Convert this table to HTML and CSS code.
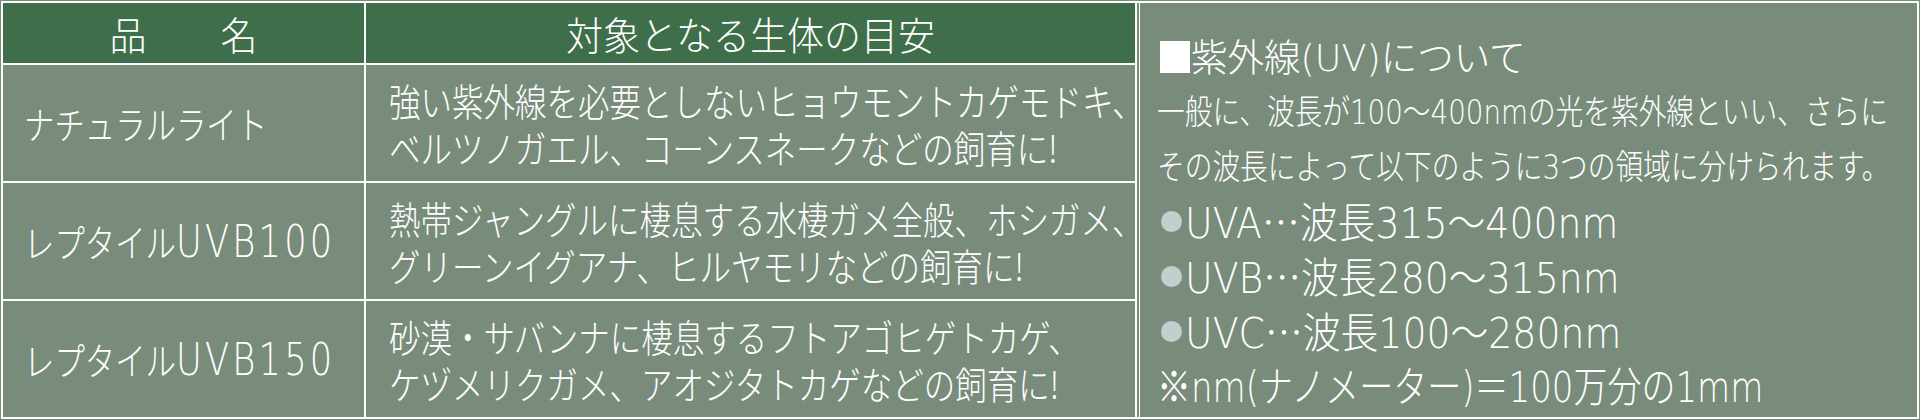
FILE: index.html
```html
<!DOCTYPE html>
<html lang="ja">
<head>
<meta charset="utf-8">
<title>紫外線ライト</title>
<link rel="stylesheet" href="styles.css">
</head>
<body>
<div class="frame">
  <div class="table">
    <div class="cell head"><span class="sx">品　　名</span></div>
    <div class="cell head"><span class="sx">対象となる生体の目安</span></div>

    <div class="cell name"><span class="sx">ナチュラルライト</span></div>
    <div class="cell desc">
      <span class="sx">強い紫外線を必要としないヒョウモントカゲモドキ、</span>
      <span class="sx">ベルツノガエル、コーンスネークなどの飼育に!</span>
    </div>

    <div class="cell name"><span class="sx">レプタイル<span class="en">UVB100</span></span></div>
    <div class="cell desc">
      <span class="sx">熱帯ジャングルに棲息する水棲ガメ全般、ホシガメ、</span>
      <span class="sx">グリーンイグアナ、ヒルヤモリなどの飼育に!</span>
    </div>

    <div class="cell name"><span class="sx">レプタイル<span class="en">UVB150</span></span></div>
    <div class="cell desc">
      <span class="sx">砂漠・サバンナに棲息するフトアゴヒゲトカゲ、</span>
      <span class="sx">ケヅメリクガメ、アオジタトカゲなどの飼育に!</span>
    </div>
  </div>

  <div class="panel">
    <p class="title"><span class="sq"></span><span class="sx">紫外線<span class="en">(UV)</span>について</span></p>
    <p class="line"><span class="sx">一般に、波長が<span class="en">100</span>～<span class="en">400nm</span>の光を紫外線といい、さらに</span></p>
    <p class="line"><span class="sx">その波長によって以下のように<span class="en">3</span>つの領域に分けられます。</span></p>
    <p class="line item"><span class="dot"></span><span class="sx"><span class="en">UVA</span>…波長<span class="en">315</span>～<span class="en">400nm</span></span></p>
    <p class="line item"><span class="dot"></span><span class="sx"><span class="en">UVB</span>…波長<span class="en">280</span>～<span class="en">315nm</span></span></p>
    <p class="line item"><span class="dot"></span><span class="sx"><span class="en">UVC</span>…波長<span class="en">100</span>～<span class="en">280nm</span></span></p>
    <p class="line note"><span class="sx">※<span class="en">nm(</span>ナノメーター<span class="en">)</span>＝<span class="en">100</span>万分の<span class="en">1mm</span></span></p>
  </div>
</div>
</body>
</html>
```

FILE: styles.css
```css
html, body {
  margin: 0;
  padding: 0;
}

body {
  width: 1920px;
  height: 420px;
  background: #798c7c;
  font-family: "Noto Sans CJK JP", "Noto Sans", sans-serif;
  font-weight: 300;
  color: #ffffff;
  overflow: hidden;
}

.frame {
  margin: 1px;
  border: 2px solid #ffffff;
  height: 414px;
  display: flex;
  gap: 2px;
}

.table {
  flex: none;
  width: 1132px;
  padding-right: 2px;
  background: #ffffff;
  display: grid;
  grid-template-columns: 361px 769px;
  grid-template-rows: 60px 1fr 1fr 1fr;
  gap: 2px;
}

.cell {
  min-width: 0;
  background: #798c7c;
  display: flex;
  flex-direction: column;
  justify-content: center;
}

/* Glyphs of the original face are tall and narrow: set the width by
   font-size and stretch the glyphs vertically. */
.sx {
  display: inline-block;
  white-space: nowrap;
  transform-origin: left center;
}

.head {
  background: #3e6e4a;
  align-items: center;
  font-size: 37px;
  line-height: 60px;
}

.head .sx {
  transform: scaleY(1.054);
}

.name {
  padding-left: 21px;
  font-size: 30.4px;
  line-height: 46px;
}

.name .sx {
  transform: scaleY(1.25);
}

.desc {
  padding-left: 23px;
  font-size: 31.5px;
  line-height: 47px;
}

.desc .sx {
  transform: scaleY(1.205);
}

.en {
  font-family: "DejaVu Sans", "Noto Sans CJK JP", sans-serif;
  font-weight: 300;
}

.name .en {
  font-size: 1.16em;
  letter-spacing: 3.2px;
}

.panel {
  flex: 1;
  min-width: 0;
  border-left: 1px solid #ffffff;
  padding: 26px 0 0 17px;
}

.panel p {
  margin: 0;
  white-space: nowrap;
}

.title {
  display: flex;
  align-items: center;
  font-size: 36.5px;
  line-height: 52px;
}

.title .sx {
  transform: scaleY(1.042);
}

.sq {
  flex: none;
  width: 30px;
  height: 32px;
  margin: 0 1px 0 3px;
  background: #ffffff;
}

.line {
  font-size: 27.7px;
  line-height: 52px;
}

.line .sx {
  transform: scaleY(1.227);
}

.item {
  display: flex;
  align-items: center;
  font-size: 37.8px;
}

.item .sx {
  transform: scaleY(1.111);
}

.line.note {
  font-size: 34px;
}

.note .sx {
  transform: scaleY(1.235);
}

.dot {
  width: 21px;
  height: 21px;
  border-radius: 50%;
  background: #c3cfcd;
  margin: 0 3px 0 4px;
  flex: none;
}
```
